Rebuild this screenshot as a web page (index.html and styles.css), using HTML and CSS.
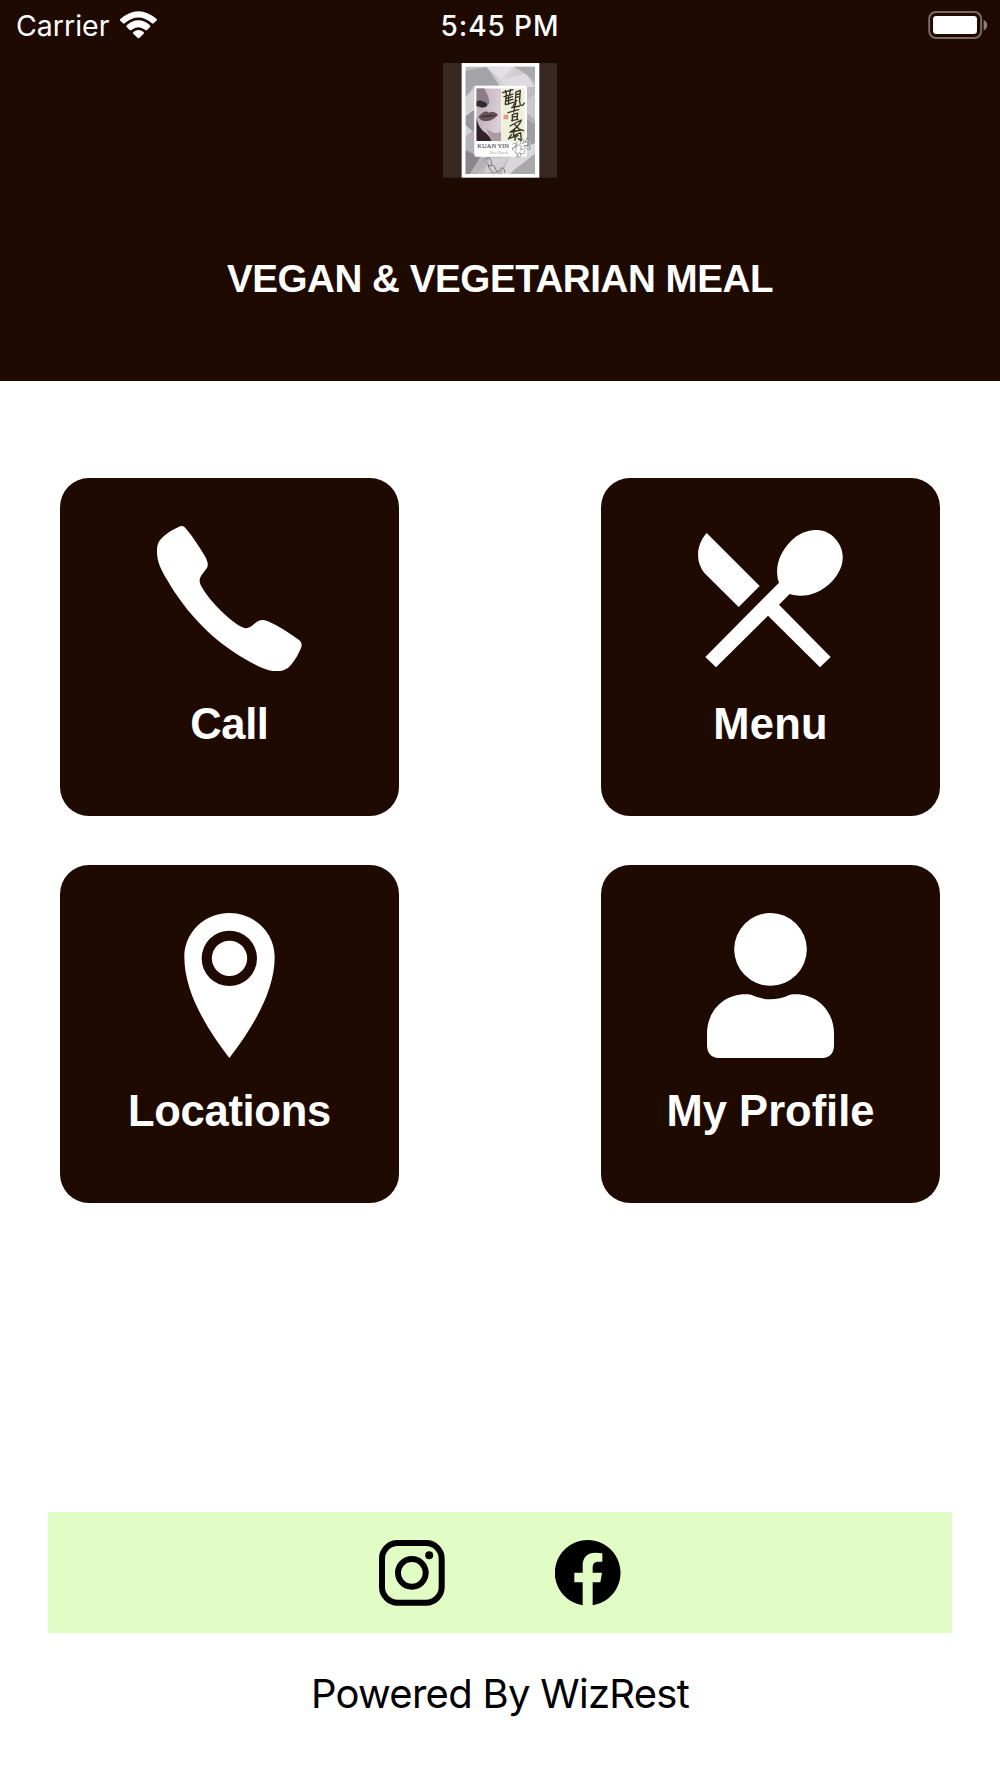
FILE: index.html
```html
<!DOCTYPE html>
<html lang="en">
<head>
<meta charset="utf-8">
<title>Kuan Yin</title>
<link rel="stylesheet" href="styles.css">
</head>
<body>
<header class="header">
  <div class="status">
    <div class="status-left">
      <span class="carrier">Carrier</span>
      <svg class="wifi" viewBox="360 29 111 83" fill="#fff">
        <path d="M361 53Q415 6 470 53Q472 56 469 58L461 66Q459 68 456 66Q415 31 374 66Q371 68 369 66L361 58Q359 56 361 53Z"/>
        <path d="M380 72Q415 42 450 72Q452 75 450 77L441 86Q439 88 436 86Q415 70 394 86Q391 88 389 86L380 77Q378 75 380 72Z"/>
        <path d="M400 92Q415 80 431 92Q433 95 431 97L418 110Q415 112 413 110L400 97Q398 95 400 92Z"/>
      </svg>
    </div>
    <span class="time">5:45 PM</span>
    <div class="status-right">
      <svg class="battery" viewBox="144 30 180 85">
        <rect x="147.500" y="33" width="156" height="78" rx="20" fill="none" stroke="#796a64" stroke-width="6"/>
        <rect x="159" y="45" width="132" height="54" rx="10" fill="#fff"/>
        <path d="M311 57C325 61 325 84 311 88Z" fill="#8b7e79"/>
      </svg>
    </div>
  </div>
  <svg class="logo" viewBox="38 190 343 344">
    <defs>
      <linearGradient id="paper" x1="0" y1="0" x2="1" y2="1">
        <stop offset="0" stop-color="#bcb9bd"/><stop offset=".35" stop-color="#d5d2d6"/><stop offset=".7" stop-color="#b2b0b3"/><stop offset="1" stop-color="#c2c0c2"/>
      </linearGradient>
      <linearGradient id="skin" x1="0" y1="0" x2="1" y2=".3">
        <stop offset="0" stop-color="#b8a8b2"/><stop offset="1" stop-color="#dccfd8"/>
      </linearGradient>
      <clipPath id="photo"><rect x="138" y="266" width="75" height="158"/></clipPath>
    </defs>
    <rect x="38" y="190" width="343" height="344" fill="#372822"/>
    <rect x="94" y="190" width="233" height="344" fill="#fff"/>
    <rect x="106" y="201" width="208" height="322" fill="url(#paper)"/>
    <path d="M106 214L168 201L208 258L132 258L106 292Z" fill="#a4a3a8"/>
    <path d="M168 201H250L212 240Z" fill="#e2e0e4"/>
    <path d="M250 201H314V246L286 222Z" fill="#aaa8ac"/>
    <path d="M212 240L286 222L314 262H228Z" fill="#dedce0"/>
    <path d="M106 292L132 270V330L106 350Z" fill="#d4d2d5"/>
    <path d="M106 350L132 330V400L106 376Z" fill="#98969a"/>
    <path d="M106 410L132 390V470L178 480L140 523H106Z" fill="#b4b2b6"/>
    <path d="M106 452L150 472L118 523H106Z" fill="#89878b"/>
    <path d="M178 476L236 472L214 510L160 523Z" fill="#d0ced1"/>
    <path d="M290 300L314 280V360L290 340Z" fill="#cac8cc"/>
    <path d="M290 360L314 372V440L290 420Z" fill="#a09ea2"/>
    <path d="M236 474L314 430V470L250 523H214Z" fill="#d9d7da"/>
    <path d="M250 512L314 462V523H240Z" fill="#aaa8ab"/>
    <path d="M162 482q14-16 20 0t-8 18q18-10 22 8t18-4q14 4 8 16M172 490q4 20 16 30" fill="none" stroke="#777579" stroke-width="3"/>
    <rect x="132" y="258" width="158" height="213" rx="6" fill="#fff"/>
    <g clip-path="url(#photo)">
      <rect x="138" y="266" width="75" height="158" fill="url(#skin)"/>
      <path d="M138 266H162C168 284 179 292 176 312C170 323 156 326 138 318Z" fill="#8e7c88"/>
      <path d="M138 306C148 298 160 304 169 311C174 322 162 326 150 322L138 319Z" fill="#302b31"/>
      <path d="M144 353C154 336 170 331 175 339C183 334 195 337 203 345C192 360 168 370 152 361Z" fill="#6b5057"/>
      <path d="M144 352Q170 344 203 346Q172 353 144 352Z" fill="#30242a"/>
      <path d="M138 352C143 376 150 390 167 400L188 424H138Z" fill="#302227"/>
      <path d="M167 385Q190 408 213 396V424H183Z" fill="#ae99a6"/>
    </g>
    <rect x="213" y="266" width="70" height="160" fill="#edf0db"/>
    <rect x="220" y="345" width="14" height="14" fill="#e59a88"/>
    <g fill="none" stroke="#3a3223" stroke-width="4" stroke-linecap="round" stroke-linejoin="round">
      <path d="M217 279L248 270M225 272L229 286M240 269L238 285M221 291L248 283M228 284L225 312M227 297L247 291M227 304L248 299M235 288V314M225 315L252 307"/>
      <path d="M257 277L255 303M257 277L270 272L268 300M258 285L266 283M257 293L267 291M259 302L248 321M267 300L270 315Q277 321 282 310"/>
      <path d="M244 324L268 319M256 312L250 337M233 339L265 330M246 345L262 340L260 359M246 345V364M247 352L260 350M244 363L263 359"/>
      <path d="M239 379L273 361Q268 379 239 398M253 374L266 388L280 393M254 386L249 405M244 397L271 391"/>
      <path d="M243 405L234 418M250 408L271 399L273 423L264 417M257 406L254 421M239 415L264 408"/>
    </g>
    <text x="141" y="446" class="logo-name" textLength="95" lengthAdjust="spacingAndGlyphs">KUAN YIN</text>
    <text x="177" y="463" class="logo-sub" textLength="56" lengthAdjust="spacingAndGlyphs">Tea House</text>
    <path d="M246 434q8-8 13 0t-7 8M258 450q-6-12 7-14t5 14q10-7 14 4t-14 7q4 12-5 10t-4-11q-12 2-3-10M270 433q0-18 8-14t-3 14q14-12 19-3t-14 8q20-1 20 8t-20-4M270 455L258 474M248 450l14-24M284 430l7-18M248 442l-2 10" fill="none" stroke="#77787a" stroke-width="2"/>
  </svg>
  <h1 class="title">VEGAN &amp; VEGETARIAN MEAL</h1>
</header>
<main class="cards">
  <a class="card">
    <svg class="card-icon" viewBox="321 169 435 435"><path d="M397 169Q402 169 408 177C430 203 448 231 464 258C474 275 476 288 470 296L455 316C448 326 447 336 452 346C475 390 530 445 571 470C582 477 592 477 602 471L620 457C628 450 640 449 652 454C684 468 716 488 744 509C755 517 757 524 753 535C746 553 734 573 722 587C708 603 690 607 668 604C648 601 620 588 585 568C490 514 410 432 352 332C330 295 322 275 321 250C320 225 326 211 343 198C358 186 374 177 390 170Z"/></svg>
    <span class="label label-call">Call</span>
  </a>
  <a class="card">
    <svg class="card-icon" viewBox="324 169 435 435"><path d="M350 190L509 349L446 412L350 317C316 283 315 229 350 190Z"/><path d="M567 339C552 297 567 250 603 214C640 177 698 168 733 204C768 239 768 292 725 336C690 372 640 387 599 373L567 405L722 562L690 593L534 438L378 593L346 562Z"/></svg>
    <span class="label label-menu">Menu</span>
  </a>
  <a class="card">
    <svg class="card-icon" viewBox="321 174 435 435"><path fill-rule="evenodd" d="M538 174C613 174 674 233 674 306C674 411 607 519 538 609C469 519 403 411 403 306C403 233 463 174 538 174ZM538 227A83 83 0 1 0 538 393A83 83 0 1 0 538 227Z"/><circle cx="538.500" cy="310" r="53"/></svg>
    <span class="label label-locations">Locations</span>
  </a>
  <a class="card">
    <svg class="card-icon" viewBox="324 174 435 435"><circle cx="541.500" cy="283" r="109"/><path d="M465 418C474 417 480 417 485 420Q541 446 598 420C603 417 609 417 618 418C682 418 732 470 732 535V569Q732 609 692 609H391Q351 609 351 569V535C351 470 401 418 465 418Z"/></svg>
    <span class="label label-profile">My Profile</span>
  </a>
</main>
<footer class="footer">
  <div class="social">
    <svg class="social-icon" viewBox="57 120 197 197"><rect x="66" y="129" width="179" height="179" rx="47" fill="none" stroke="#000" stroke-width="18"/><circle cx="155.500" cy="218.500" r="41.500" fill="none" stroke="#000" stroke-width="18"/><circle cx="207.500" cy="166" r="12"/></svg>
    <svg class="social-icon" viewBox="586 120 197 197"><path d="M669 316V247H644V218H669V196C669 171 684 158 707 158Q718 158 728 160V185H716C704 185 699 192 699 202V218H727L722 247H699V316A98.500 98.500 0 1 0 669 316Z"/></svg>
  </div>
  <p class="powered">Powered By WizRest</p>
</footer>
</body>
</html>
```
FILE: styles.css
```css
* { box-sizing: border-box; }
body {
  margin: 0;
  width: 1000px;
  height: 1778px;
  display: flex;
  flex-direction: column;
  background: #fff;
  font-family: "Liberation Sans", Arial, sans-serif;
}
.header {
  height: 381.4px;
  flex: none;
  display: flex;
  flex-direction: column;
  align-items: center;
  background: #1e0a00;
  color: #fff;
}
.status {
  width: 100%;
  height: 48px;
  display: grid;
  grid-template-columns: 1fr auto 1fr;
  align-items: center;
  padding: 0 12px;
  font-family: Inter, sans-serif;
  line-height: 48px;
}
.status-left { display: flex; align-items: center; gap: 10px; padding-left: 4px; }
.carrier { font-size: 28.5px; width: 94px; white-space: nowrap; padding-top: 2px; }
.wifi { width: 37px; height: 27.7px; }
.time { font-size: 28px; font-weight: 500; letter-spacing: 0.9px; padding-top: 2px; white-space: nowrap; }
.status-right { display: flex; justify-content: flex-end; }
.battery { width: 60px; height: 28.3px; }
.logo { width: 114.3px; height: 114.7px; margin-top: 15.3px; flex: none; }
.logo-name { font: 20px "Liberation Serif", serif; fill: #58585c; stroke: #58585c; stroke-width: 0.5px; }
.logo-sub { font: italic 13px "Liberation Serif", serif; fill: #9c9ca0; }
.title {
  margin: 79px 0 0;
  font-size: 38.6px;
  line-height: 44px;
  font-weight: bold;
  letter-spacing: -0.45px;
  white-space: nowrap;
}
.cards {
  display: grid;
  grid-template-columns: 338.3px 338.3px;
  grid-auto-rows: 338.3px;
  justify-content: space-between;
  row-gap: 48.3px;
  padding: 96.7px 60.3px 0;
}
.card {
  display: flex;
  flex-direction: column;
  align-items: center;
  padding-top: 48.3px;
  border-radius: 29px;
  background: #1e0a00;
  color: #fff;
}
.card-icon { width: 145px; height: 145px; flex: none; fill: #fff; }
.label { margin-top: 27.6px; font-size: 43.5px; line-height: 50px; font-weight: bold; white-space: nowrap; }
.label-call { letter-spacing: -0.4px; }
.label-menu { letter-spacing: 0.2px; }
.label-locations { letter-spacing: -0.3px; }
.footer {
  margin-top: auto;
  height: 266.3px;
  padding: 0 48.3px;
}
.social {
  height: 121px;
  display: flex;
  align-items: center;
  justify-content: center;
  gap: 110.7px;
  padding-top: 1.4px;
  background: #e1fdc5;
}
.social-icon { width: 65.7px; height: 65.7px; }
.powered {
  margin: 36.7px 0 0;
  font: 40px/50px Inter, sans-serif;
  letter-spacing: -0.72px;
  text-align: center;
  color: #000;
}
```
